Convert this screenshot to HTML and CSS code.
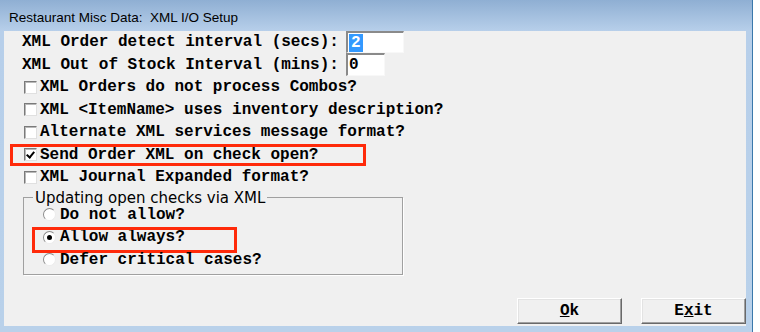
FILE: index.html
```html
<!DOCTYPE html>
<html lang="en">
<head>
  <meta charset="UTF-8">
  <title>Restaurant Misc Data: XML I/O Setup</title>
  <link rel="stylesheet" href="styles.css">
</head>
<body>
  <div class="window">
    <div class="titlebar">Restaurant Misc Data:  XML I/O Setup</div>
    <div class="client">
      <div class="field-row">
        <span class="label">XML Order detect interval (secs):</span>
        <span class="field wide"><span class="sel">2</span></span>
      </div>
      <div class="field-row tall">
        <span class="label">XML Out of Stock Interval (mins):</span>
        <span class="field narrow">0</span>
      </div>
      <div class="check-row"><span class="checkbox"></span>XML Orders do not process Combos?</div>
      <div class="check-row"><span class="checkbox"></span>XML &lt;ItemName&gt; uses inventory description?</div>
      <div class="check-row"><span class="checkbox"></span>Alternate XML services message format?</div>
      <div class="check-row marked"><span class="checkbox checked"></span>Send Order XML on check open?</div>
      <div class="check-row"><span class="checkbox"></span>XML Journal Expanded format?</div>

      <fieldset class="group">
        <legend>Updating open checks via XML</legend>
        <div class="radio-row"><span class="radio"></span>Do not allow?</div>
        <div class="radio-row marked"><span class="radio on"></span>Allow always?</div>
        <div class="radio-row"><span class="radio"></span>Defer critical cases?</div>
      </fieldset>

      <div class="buttons">
        <button class="btn"><u>O</u>k</button>
        <button class="btn">E<u>x</u>it</button>
      </div>
    </div>
  </div>
</body>
</html>
```

FILE: styles.css
```css
body {
  margin: 0;
  background: #fff;
  overflow: hidden;
}
.window {
  display: flex;
  flex-direction: column;
  width: 753px;
  height: 332px;
  box-sizing: border-box;
  padding: 0 6px 6px 4px;
  background: linear-gradient(#8fafd3, #b7cfea 31px, #b9d1ea);
  border-right: 1px solid #3a78ab;
}
.titlebar {
  height: 31px;
  box-sizing: border-box;
  padding: 4px 0 0 5px;
  display: flex;
  align-items: center;
  font-family: 'Liberation Sans', Arial, sans-serif;
  font-size: 13.5px;
  color: #000;
  white-space: pre;
}
.client {
  flex: 1;
  display: flex;
  flex-direction: column;
  background: #f0f0f0;
  padding-left: 18px;
  font-family: 'Liberation Mono', 'Courier New', monospace;
  font-weight: bold;
  font-size: 16px;
  color: #000;
}
.field-row {
  display: flex;
  align-items: center;
  height: 22px;
}
.field-row.tall { height: 23px; }
.label {
  width: 324px;
  white-space: pre;
}
.field {
  height: 100%;
  box-sizing: border-box;
  background: #fff;
  border-style: solid;
  border-width: 2px 1px 1px 2px;
  border-color: #8a8a8a #f8f8f8 #f8f8f8 #8a8a8a;
  padding-left: 1px;
  display: flex;
  align-items: center;
}
.field.wide { width: 58px; }
.field.narrow { width: 39px; }
.sel {
  background: #3399ff;
  color: #fff;
  padding: 0 2px;
  line-height: 18px;
}

.check-row, .radio-row {
  display: flex;
  align-items: center;
  height: 22.5px;
  position: relative;
  white-space: pre;
}
.checkbox {
  width: 13px;
  height: 13px;
  box-sizing: border-box;
  margin: 0 3px 0 2px;
  background: #fff;
  border-style: solid;
  border-width: 1px;
  border-color: #7a7a7a #e0e0e0 #e0e0e0 #7a7a7a;
  box-shadow: inset 1px 1px #b8b8b8;
  position: relative;
}
.checkbox.checked::before {
  content: '';
  position: absolute;
  left: 2px;
  top: 1px;
  width: 3px;
  height: 6px;
  border: solid #000;
  border-width: 0 2px 2px 0;
  transform: translate(1px, 0) rotate(40deg);
}
.check-row.marked::after {
  content: '';
  position: absolute;
  left: -12px;
  top: 0;
  width: 356px;
  height: 22px;
  box-sizing: border-box;
  border: 3px solid #ff2a0a;
}

.group {
  margin: 3px 0 0 1px;
  width: 380px;
  box-sizing: border-box;
  padding: 0 0 3px 0;
  border: 1px solid #a0a0a0;
  box-shadow: 1px 1px 0 #fff;
  min-width: 0;
}
.group legend {
  margin-left: 9px;
  padding: 0 2px;
  font-family: 'DejaVu Sans', sans-serif;
  font-weight: normal;
  font-size: 15px;
  line-height: 12px;
}
.radio-row { padding-left: 19px; }
.radio {
  width: 13px;
  height: 13px;
  box-sizing: border-box;
  margin-right: 4px;
  border-radius: 50%;
  background: #fff;
  border: 1px solid;
  border-color: #8a8a8a #ececec #ececec #8a8a8a;
  position: relative;
}
.radio.on::before {
  content: '';
  position: absolute;
  left: 3px;
  top: 3px;
  width: 5px;
  height: 5px;
  border-radius: 50%;
  background: #000;
}
.radio-row.marked::after {
  content: '';
  position: absolute;
  left: 8px;
  top: 0.5px;
  width: 205px;
  height: 26px;
  box-sizing: border-box;
  border: 3px solid #ff2a0a;
}

.buttons {
  margin-top: auto;
  display: flex;
  justify-content: flex-end;
  gap: 19px;
  padding-bottom: 2px;
}
.btn {
  width: 105px;
  height: 26px;
  padding: 0;
  background: #f0f0f0;
  font-family: 'Liberation Mono', 'Courier New', monospace;
  font-weight: bold;
  font-size: 16px;
  color: #000;
  border: 1px solid;
  border-color: #fff #696969 #696969 #fff;
  box-shadow: inset -1px -1px #a0a0a0, inset 1px 1px #e3e3e3;
}
```
